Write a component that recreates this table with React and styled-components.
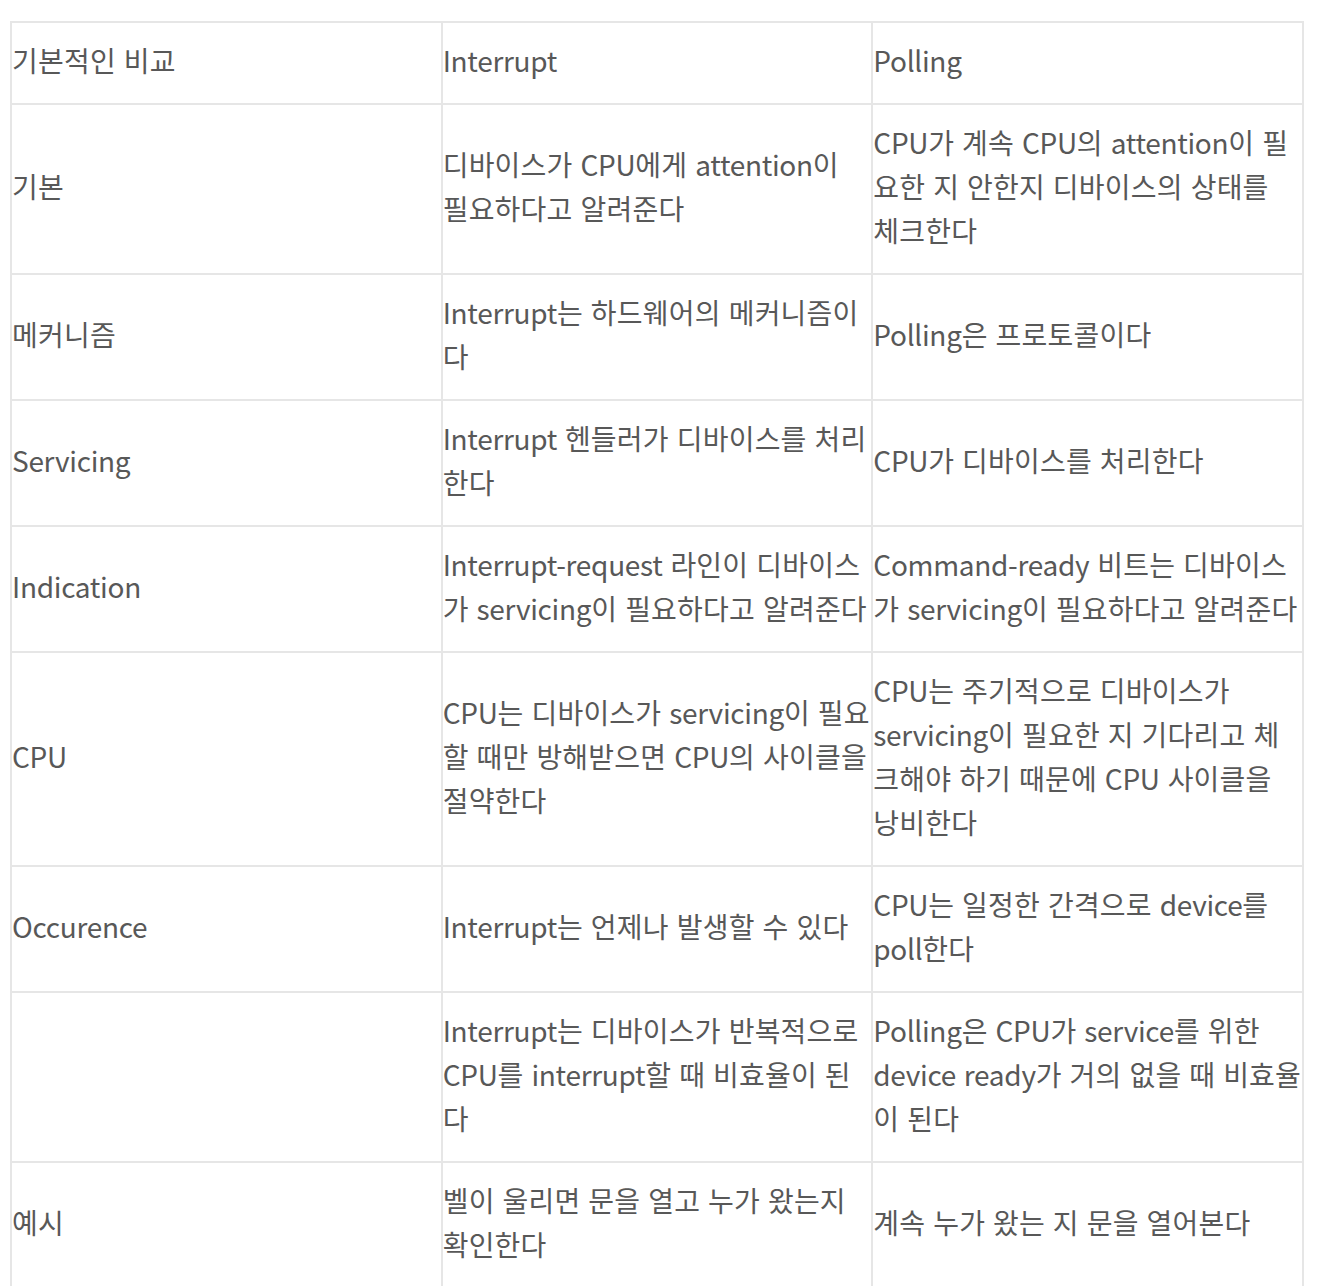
import React from 'react';
import styled, { createGlobalStyle } from 'styled-components';

const GlobalStyle = createGlobalStyle`
  body {
    margin: 0;
    background: #ffffff;
    font-family: "Noto Sans CJK KR", "Noto Sans", sans-serif;
  }
`;

const head = ['기본적인 비교', 'Interrupt', 'Polling'];

const rows = [
  ['기본', '디바이스가 CPU에게 attention이 필요하다고 알려준다', 'CPU가 계속 CPU의 attention이 필요한 지 안한지 디바이스의 상태를 체크한다'],
  ['메커니즘', 'Interrupt는 하드웨어의 메커니즘이다', 'Polling은 프로토콜이다'],
  ['Servicing', 'Interrupt 헨들러가 디바이스를 처리한다', 'CPU가 디바이스를 처리한다'],
  ['Indication', 'Interrupt-request 라인이 디바이스가 servicing이 필요하다고 알려준다', 'Command-ready 비트는 디바이스가 servicing이 필요하다고 알려준다'],
  ['CPU', 'CPU는 디바이스가 servicing이 필요할 때만 방해받으면 CPU의 사이클을 절약한다', 'CPU는 주기적으로 디바이스가 servicing이 필요한 지 기다리고 체크해야 하기 때문에 CPU 사이클을 낭비한다'],
  ['Occurence', 'Interrupt는 언제나 발생할 수 있다', 'CPU는 일정한 간격으로 device를 poll한다'],
  ['', 'Interrupt는 디바이스가 반복적으로 CPU를 interrupt할 때 비효율이 된다', 'Polling은 CPU가 service를 위한 device ready가 거의 없을 때 비효율이 된다'],
  ['예시', '벨이 울리면 문을 열고 누가 왔는지 확인한다', '계속 누가 왔는 지 문을 열어본다'],
];

const Page = styled.div`
  padding: 21px 14px 0 10px;
`;

const Table = styled.table`
  width: 1294px;
  table-layout: fixed;
  border-collapse: collapse;
  border: 2px solid #e6e6e6;
`;

const Cell = styled.td`
  border: 2px solid #e6e6e6;
  padding: 15px 0 21px;
  vertical-align: middle;
  text-align: left;
  font-size: 28px;
  font-weight: 400;
  line-height: 44px;
  letter-spacing: 0.22px;
  word-spacing: 1.4px;
  color: #585858;
`;

const HeadCell = styled(Cell).attrs({ as: 'th' })``;

// latin words sit a touch tighter than the hangul around them
const Latin = styled.span`
  letter-spacing: -0.3px;
`;

const Text = ({ children }) =>
  children
    .split(/([A-Za-z-]+)/)
    .map((part, i) => (i % 2 ? <Latin key={i}>{part}</Latin> : part));

const App = () => (
  <>
    <GlobalStyle />
    <Page>
      <Table>
        <thead>
          <tr>
            {head.map((h) => (
              <HeadCell key={h}>
                <Text>{h}</Text>
              </HeadCell>
            ))}
          </tr>
        </thead>
        <tbody>
          {rows.map((r, i) => (
            <tr key={i}>
              {r.map((c, j) => (
                <Cell key={j}>
                  <Text>{c}</Text>
                </Cell>
              ))}
            </tr>
          ))}
        </tbody>
      </Table>
    </Page>
  </>
);

export default App;
